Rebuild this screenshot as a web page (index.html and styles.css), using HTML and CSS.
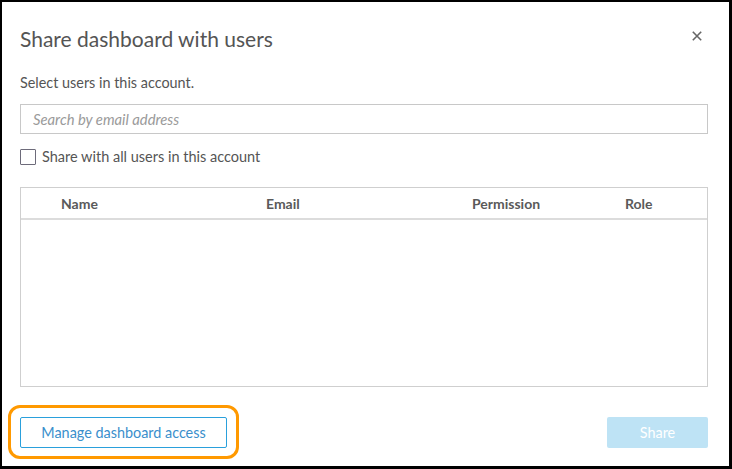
FILE: index.html
```html
<!DOCTYPE html>
<html lang="en">
<head>
<meta charset="utf-8">
<title>Share dashboard with users</title>
<link rel="stylesheet" href="styles.css">
</head>
<body>
<div class="frame">
  <div class="modal">
    <div class="head">
      <h1 class="title">Share dashboard with users</h1>
      <button class="close" aria-label="Close">
        <svg width="10" height="10" viewBox="0 0 10 10"><path d="M0.8 0.8 L9.2 9.2 M9.2 0.8 L0.8 9.2" stroke="#666" stroke-width="1.6" fill="none"/></svg>
      </button>
    </div>
    <p class="sub">Select users in this account.</p>
    <input class="search" type="text" placeholder="Search by email address">
    <label class="check"><span class="box"></span><span>Share with all users in this account</span></label>
    <div class="table">
      <div class="thead">
        <span></span>
        <span>Name</span>
        <span>Email</span>
        <span>Permission</span>
        <span>Role</span>
      </div>
      <div class="tbody"></div>
    </div>
    <div class="foot">
      <div class="highlight">
        <button class="btn-outline">Manage dashboard access</button>
      </div>
      <button class="btn-primary" disabled>Share</button>
    </div>
  </div>
</div>
</body>
</html>
```
FILE: styles.css
```css
* { box-sizing: border-box; }
html, body { margin: 0; padding: 0; background: #fff; }
body { font-family: Lato, "Noto Sans", "Liberation Sans", sans-serif; color: #555; }

.frame {
  width: 732px;
  height: 469px;
  border-style: solid;
  border-color: #000;
  border-width: 2px 3px 3px 2px;
  background: #fff;
}

.modal {
  display: flex;
  flex-direction: column;
  padding: 0 21px 0 18px;
  height: 100%;
}

.head {
  display: flex;
  align-items: center;
  justify-content: space-between;
  margin-top: 23px;
  height: 28px;
}
.title {
  margin: 0;
  font-size: 21px;
  font-weight: 400;
  color: #545454;
  line-height: 28px;
}
.close {
  border: 0;
  background: none;
  padding: 0;
  width: 10px;
  height: 10px;
  margin-right: 6px;
  margin-top: -6px;
  display: flex;
}

.sub {
  margin: 21px 0 0;
  font-size: 14.4px;
  line-height: 18px;
  color: #555;
}

.search {
  margin-top: 12px;
  height: 30px;
  width: 100%;
  border: 1px solid #c8c8c8;
  border-radius: 0;
  padding: 0 12px;
  font-family: inherit;
  font-size: 14.8px;
  color: #555;
  outline: none;
}
.search::placeholder { color: #9a9a9a; font-style: italic; }

.check {
  display: flex;
  align-items: center;
  gap: 6px;
  margin-top: 15px;
  font-size: 14.5px;
  line-height: 16px;
  height: 16px;
  color: #555;
}
.box {
  width: 16px;
  height: 16px;
  border: 1px solid #6d6b7a;
  border-radius: 1px;
  flex: none;
}

.table {
  margin-top: 22px;
  height: 200px;
  border: 1px solid #cfcfcf;
  display: flex;
  flex-direction: column;
}
.thead {
  display: grid;
  grid-template-columns: 40px 205px 206px 153px 1fr;
  height: 32px;
  align-items: center;
  border-bottom: 2px solid #dcdcdc;
  font-size: 14px;
  font-weight: 700;
  color: #5a5a5a;
}
.tbody { flex: 1; }

.foot {
  display: flex;
  justify-content: space-between;
  align-items: center;
  margin-top: 30px;
}
.highlight { position: relative; }
.highlight::after {
  content: "";
  position: absolute;
  left: -12px;
  top: -12px;
  right: -12px;
  bottom: -11px;
  border: 3.5px solid #ff9900;
  border-radius: 12px;
  pointer-events: none;
}
.btn-outline {
  height: 31px;
  width: 207px;
  border: 1px solid #2aa0dc;
  border-radius: 2px;
  background: #fff;
  color: #3a8fcc;
  font-family: inherit;
  font-size: 14.4px;
  padding: 0;
}
.btn-primary {
  height: 31px;
  width: 101px;
  border: 0;
  border-radius: 2px;
  background: #bee3f5;
  color: #fff;
  font-family: inherit;
  font-size: 14.4px;
  padding: 0;
}
```
